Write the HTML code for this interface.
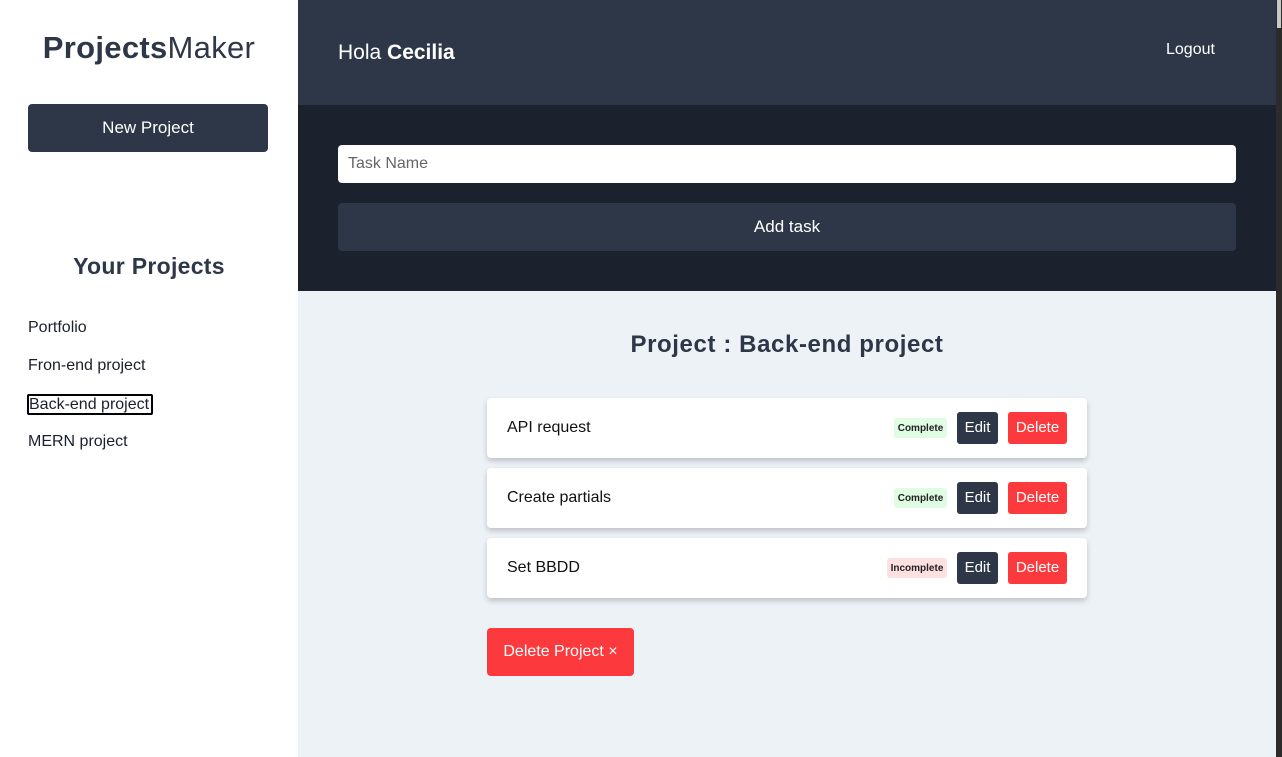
<!DOCTYPE html>
<html><head><meta charset="utf-8"><style>
*{box-sizing:border-box;margin:0;padding:0}
body{width:1282px;height:757px;overflow:hidden;font-family:"Liberation Sans",sans-serif;background:#edf2f7;position:relative}
.side{position:absolute;left:0;top:0;width:298px;height:757px;background:#fff}
.logo{position:absolute;top:30px;left:0;width:298px;text-align:center;font-size:31px;color:#2d3748;letter-spacing:0.3px}
.logo b{font-weight:900}
.np{position:absolute;left:28px;top:104px;width:240px;height:48px;background:#2d3748;border-radius:4px;color:#fff;font-size:17px;text-align:center;line-height:48px}
.yp{position:absolute;top:253px;width:298px;text-align:center;font-size:23px;font-weight:bold;color:#2d3748;letter-spacing:0.3px}
.pl{position:absolute;left:28px;font-size:16px;color:#1a202c}
.hdr{position:absolute;left:298px;top:0;width:978px;height:105px;background:#2e3748}
.hola{position:absolute;left:40px;top:41px;color:#fff;font-size:21px}
.logout{position:absolute;left:868px;top:41px;color:#fff;font-size:16px}
.form{position:absolute;left:298px;top:105px;width:978px;height:186px;background:#1c212e}
.inp{position:absolute;left:40px;top:40px;width:898px;height:38px;background:#fff;border-radius:4px;color:#666;font-size:16px;padding:10px 10px}
.add{position:absolute;left:40px;top:98px;width:898px;height:48px;background:#2e3748;border-radius:4px;color:#fff;font-size:17px;text-align:center;line-height:48px}
.title{position:absolute;left:298px;top:331px;width:978px;text-align:center;font-size:24px;font-weight:bold;color:#2d3748;letter-spacing:0.6px}
.card{position:absolute;left:487px;width:600px;height:60px;background:#fff;border-radius:4px;box-shadow:0 3px 6px rgba(0,0,0,.2)}
.card .n{position:absolute;left:20px;top:21px;font-size:16px;color:#111}
.badge{position:absolute;top:20px;height:20px;border-radius:3px;font-size:10px;font-weight:bold;line-height:21px;text-align:center;color:#222}
.edit{position:absolute;left:470px;top:14px;width:41px;height:32px;background:#2e3748;border-radius:3px;color:#fff;font-size:15px;line-height:32px;text-align:center}
.del{position:absolute;left:521px;top:14px;width:59px;height:32px;background:#fc393c;border-radius:3px;color:#fff;font-size:15px;line-height:32px;text-align:center}
.dp{position:absolute;left:487px;top:628px;width:147px;height:48px;background:#fc393c;border-radius:4px;color:#fff;font-size:16px;line-height:48px;text-align:center}
.sb{position:absolute;left:1276px;top:0;width:6px;height:757px;background:#2b2b2b}
.sbt{position:absolute;left:1277px;top:0;width:4px;height:28px;background:#c8c8c8}
</style></head><body>
<div class="side">
<div class="logo"><b>Projects</b>Maker</div>
<div class="np">New Project</div>
<div class="yp">Your Projects</div>
<div class="pl" style="top:319px">Portfolio</div>
<div class="pl" style="top:357px">Fron-end project</div>
<div class="pl" style="top:394px;left:27px;border:2px solid #000;border-radius:2px;padding:0 2px 0 0;line-height:17px">Back-end project</div>
<div class="pl" style="top:433px">MERN project</div>
</div>
<div class="hdr"><div class="hola">Hola <b>Cecilia</b></div><div class="logout">Logout</div></div>
<div class="form"><div class="inp">Task Name</div><div class="add">Add task</div></div>
<div class="title">Project : Back-end project</div>
<div class="card" style="top:398px"><div class="n">API request</div><div class="badge" style="left:407px;width:53px;background:#e0fce3">Complete</div><div class="edit">Edit</div><div class="del">Delete</div></div>
<div class="card" style="top:468px"><div class="n">Create partials</div><div class="badge" style="left:407px;width:53px;background:#e0fce3">Complete</div><div class="edit">Edit</div><div class="del">Delete</div></div>
<div class="card" style="top:538px"><div class="n">Set BBDD</div><div class="badge" style="left:400px;width:60px;background:#fde0e0">Incomplete</div><div class="edit">Edit</div><div class="del">Delete</div></div>
<div class="dp">Delete Project ×</div>
<div class="sb"></div><div class="sbt"></div>
</body></html>
